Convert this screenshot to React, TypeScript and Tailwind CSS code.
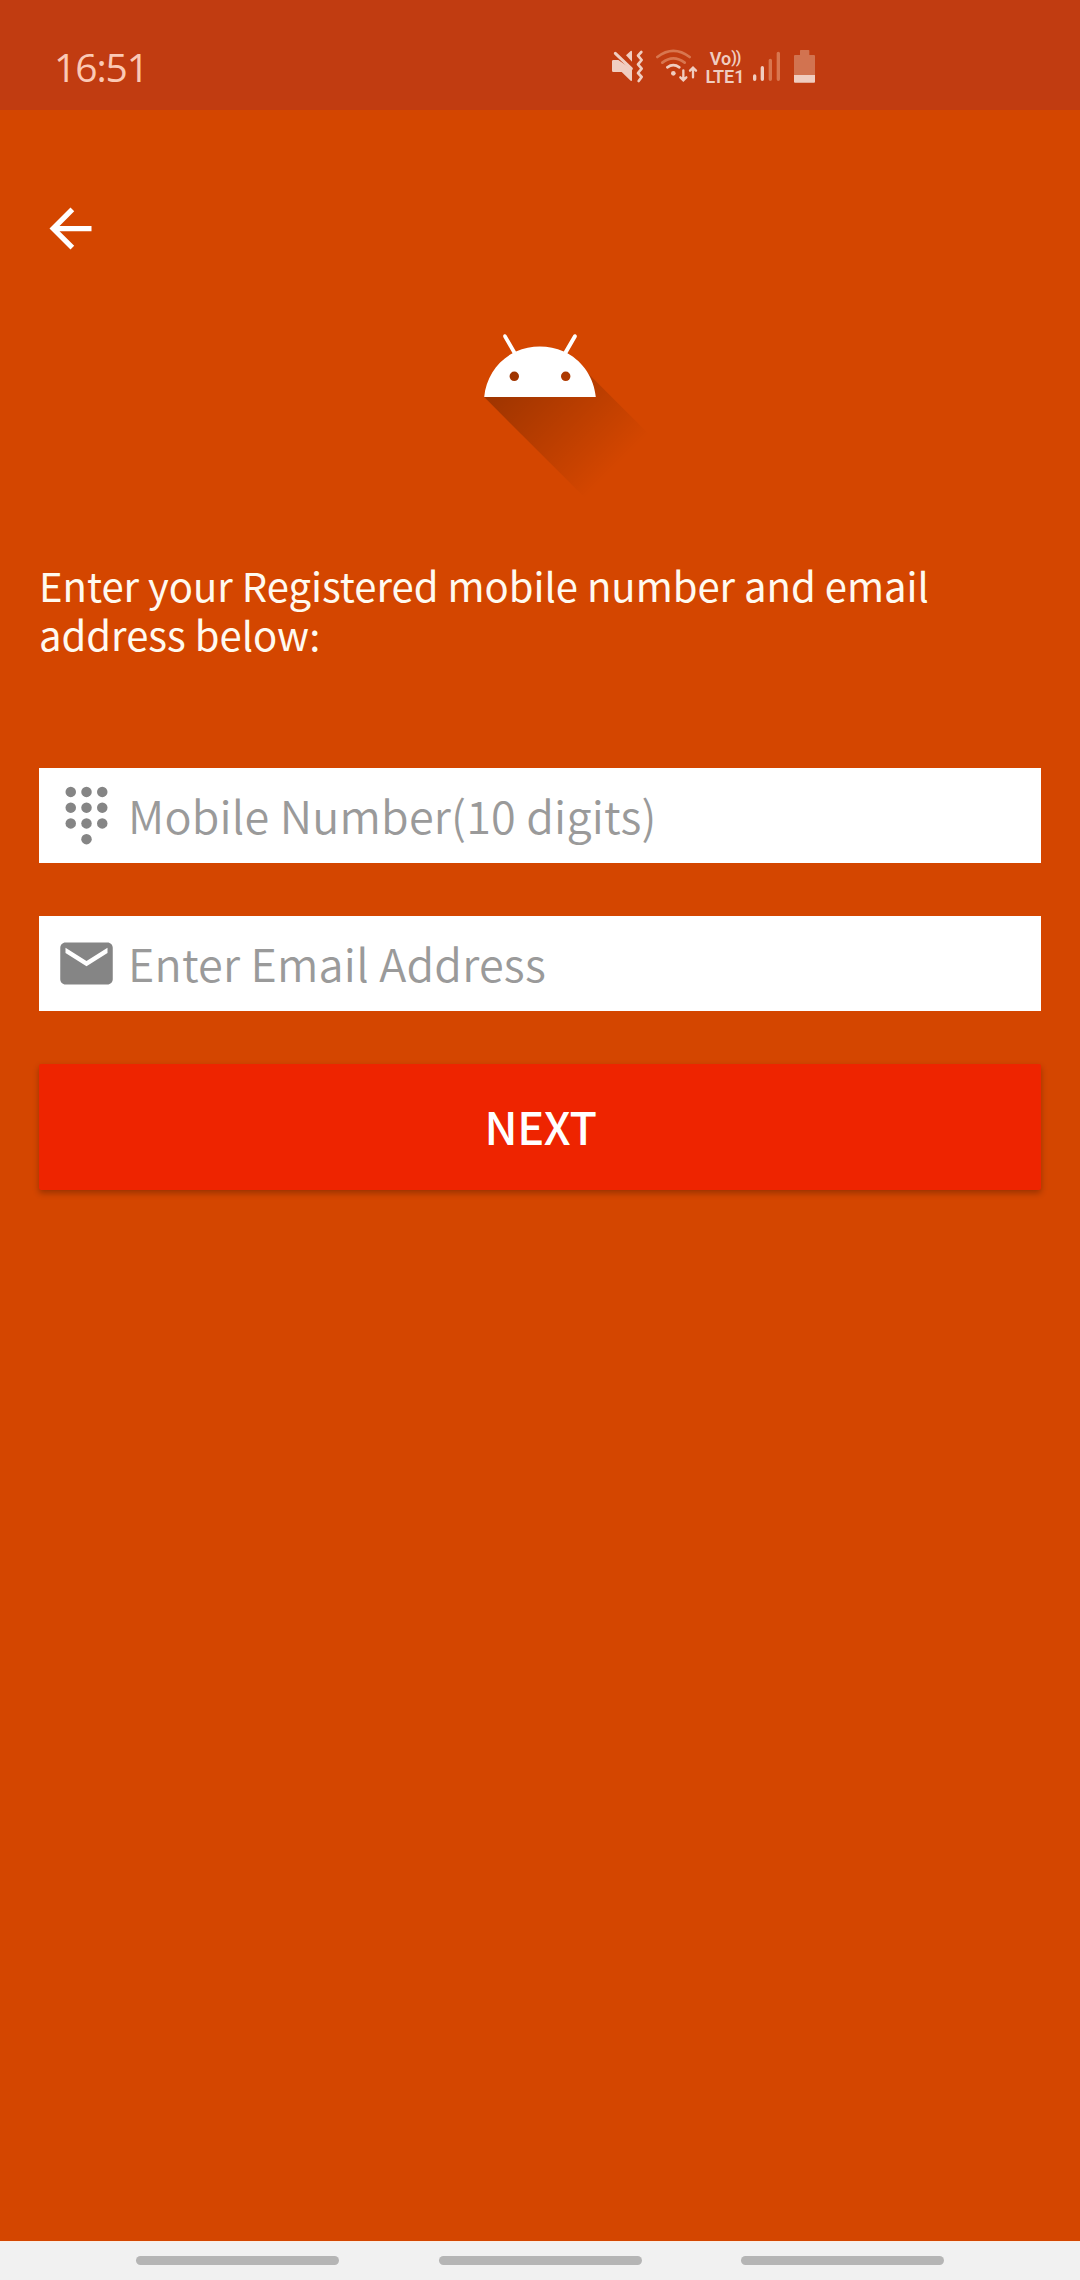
import type { ReactNode } from "react";

function StatusIcons() {
  return (
    <div className="flex h-9 items-start">
      <svg className="mr-3 h-9 w-8" viewBox="66 54 96 108">
        <path d="M70 90h15l41 28v32q0 4-4 2l-27-26H70q-4 0-4-4V94q0-4 4-4z" fill="#f0cdc0" />
        <path d="M76 70l48 46" stroke="#f0cdc0" strokeWidth="9" strokeLinecap="round" />
        <path d="M108 76l14-13q4-2 4 3v29z" fill="#f0cdc0" />
        <path d="M154 66l-10 11 11 13-11 13 11 13-11 13 11 12-9 12" fill="none" stroke="#f0cdc0" strokeWidth="8" strokeLinecap="round" strokeLinejoin="round" />
      </svg>
      <svg className="mr-1.5 h-9 w-[42px]" viewBox="198 54 126 108" fill="none" strokeWidth="8" strokeLinecap="round">
        <path d="M202 81Q250 44 299 81M217 98Q250 72 284 98" stroke="#d8764f" />
        <path d="M232 112Q250 99 268 112" stroke="#f0cdc0" />
        <circle cx="250" cy="130" r="7" fill="#f0cdc0" />
        <path d="M280 121v29M271 142l9 9 9-9M309 142v-28M300 122l9-9 9 9" stroke="#f0cdc0" strokeWidth="7" />
      </svg>
      <div className="mr-1.5 w-[42px] text-center font-[Roboto,sans-serif] font-semibold text-[#f0cdc0]">
        <div className="flex h-[18px] items-start justify-center whitespace-nowrap text-[18px] leading-[22px]">
          Vo<span className="text-[16px] leading-[20px] tracking-[-1px]">))</span>
        </div>
        <div className="h-[18px] whitespace-nowrap text-[18px] leading-[21px]">LTE1</div>
      </div>
      <svg className="mr-[13px] h-9 w-[29px]" viewBox="486 54 87 108" fill="none" strokeWidth="10" strokeLinecap="round">
        <path d="M494 138v10M517 113v35" stroke="#f0cdc0" />
        <path d="M541 91v57M565 70v78" stroke="#d8764f" />
      </svg>
      <svg className="h-9 w-[21px]" viewBox="612 54 63 108">
        <path d="M630 62q0-2 2-2h24q2 0 2 2v13h14q3 0 3 3v57h-63V78q0-3 3-3h15z" fill="#d27350" />
        <path d="M612 135h63v20q0 3-3 3h-57q-3 0-3-3z" fill="#f0cdc0" />
      </svg>
    </div>
  );
}

function AndroidLogo() {
  return (
    <svg className="h-[262px] w-[262px]" viewBox="0 0 108 108">
      <defs>
        <linearGradient id="shade" gradientUnits="userSpaceOnUse" x1="42.9492" y1="49.59793" x2="85.84757" y2="92.4963">
          <stop offset="0" stopColor="#000" stopOpacity="0.267" />
          <stop offset="1" stopColor="#000" stopOpacity="0" />
        </linearGradient>
      </defs>
      <path fill="url(#shade)" d="M31,63.928c0,0 6.4,-11 12.1,-13.1c7.2,-2.6 26,-1.4 26,-1.4l38.1,38.1L107,108.928l-32,-1L31,63.928z" />
      <path
        fill="#fff"
        fillRule="evenodd"
        d="M65.3,45.828l3.8,-6.6c0.2,-0.4 0.1,-0.9 -0.3,-1.1c-0.4,-0.2 -0.9,-0.1 -1.1,0.3l-3.9,6.7c-6.3,-2.8 -13.4,-2.8 -19.7,0l-3.9,-6.7c-0.2,-0.4 -0.7,-0.5 -1.1,-0.3C38.8,38.328 38.7,38.828 38.9,39.228l3.8,6.6C36.2,49.428 31.7,56.028 31,63.928h46C76.3,56.028 71.8,49.428 65.3,45.828zM43.4,57.328a1.95,1.95 0 1 1 0,-3.9a1.95,1.95 0 1 1 0,3.9zM64.6,57.328a1.95,1.95 0 1 1 0,-3.9a1.95,1.95 0 1 1 0,3.9z"
      />
    </svg>
  );
}

function DialpadIcon() {
  const dots = [
    [6, 3], [12, 3], [18, 3],
    [6, 9], [12, 9], [18, 9],
    [6, 15], [12, 15], [18, 15],
    [12, 21],
  ];
  return (
    <svg className="h-[63px] w-[63px]" viewBox="0 0 24 24" fill="#858585">
      {dots.map(([x, y]) => (
        <circle key={`${x}-${y}`} cx={x} cy={y} r="2" />
      ))}
    </svg>
  );
}

function MailIcon() {
  return (
    <svg className="h-[63px] w-[63px]" viewBox="0 0 24 24" fill="#858585">
      <path d="M20 4H4c-1.1 0-1.99.9-1.99 2L2 18c0 1.1.9 2 2 2h16c1.1 0 2-.9 2-2V6c0-1.1-.9-2-2-2zm0 4l-8 5-8-5V6l8 5 8-5v2z" />
    </svg>
  );
}

function Field({ icon, label }: { icon: ReactNode; label: string }) {
  return (
    <label className="flex h-[95px] items-center bg-white pl-4">
      {icon}
      <span className="ml-2.5 pb-0.5 text-[45px] leading-[60px] font-[350] tracking-[0.2px] text-[#9a9a9a]">{label}</span>
    </label>
  );
}

export default function App() {
  return (
    <div className="flex h-[2280px] w-[1080px] flex-col overflow-hidden bg-[#d44600] font-['Noto_Sans_CJK_SC',sans-serif]">
      <header className="flex h-[110px] shrink-0 items-start bg-[#c13c11] pt-12 pl-[54px]">
        <span className="-mt-1 w-[558px] font-['Open_Sans',sans-serif] text-[39px] leading-[46px] tracking-[-1.1px] text-[#fbc9b5]">16:51</span>
        <StatusIcons />
      </header>

      <main className="flex flex-1 flex-col px-[39px] pt-[87px]">
        <button className="h-[63px] w-[63px]" aria-label="Back">
          <svg className="h-[63px] w-[63px]" viewBox="0 0 24 24" fill="#fff">
            <path d="M20 11H7.83l5.59-5.59L12 4l-8 8 8 8 1.41-1.41L7.83 13H20v-2z" />
          </svg>
        </button>

        <div className="-mt-[18.5px] flex justify-center">
          <AndroidLogo />
        </div>

        <p className="mt-[57.5px] h-[98px] text-[40px] leading-[49px] text-[#fffaf0]">
          Enter your Registered mobile number and email
          <br />
          address below:
        </p>

        <form className="mt-[109px] flex flex-col gap-[53px]">
          <Field icon={<DialpadIcon />} label="Mobile Number(10 digits)" />
          <Field icon={<MailIcon />} label="Enter Email Address" />
          <button
            type="button"
            className="flex h-[126px] items-center justify-center rounded-[2px] bg-[#ee2400] pb-[3px] pl-px text-[45px] font-medium tracking-[-0.3px] text-white shadow-[0_3px_6px_rgba(0,0,0,0.28)]"
          >
            NEXT
          </button>
        </form>
      </main>

      <nav className="flex h-[39px] shrink-0 items-start justify-center gap-[99.5px] border-t border-[#fbeee4] bg-[#f1f1f1] pt-3.5">
        <span className="h-[9px] w-[203px] rounded-full bg-[#b5b5b5]" />
        <span className="h-[9px] w-[203px] rounded-full bg-[#b5b5b5]" />
        <span className="h-[9px] w-[203px] rounded-full bg-[#b5b5b5]" />
      </nav>
    </div>
  );
}
